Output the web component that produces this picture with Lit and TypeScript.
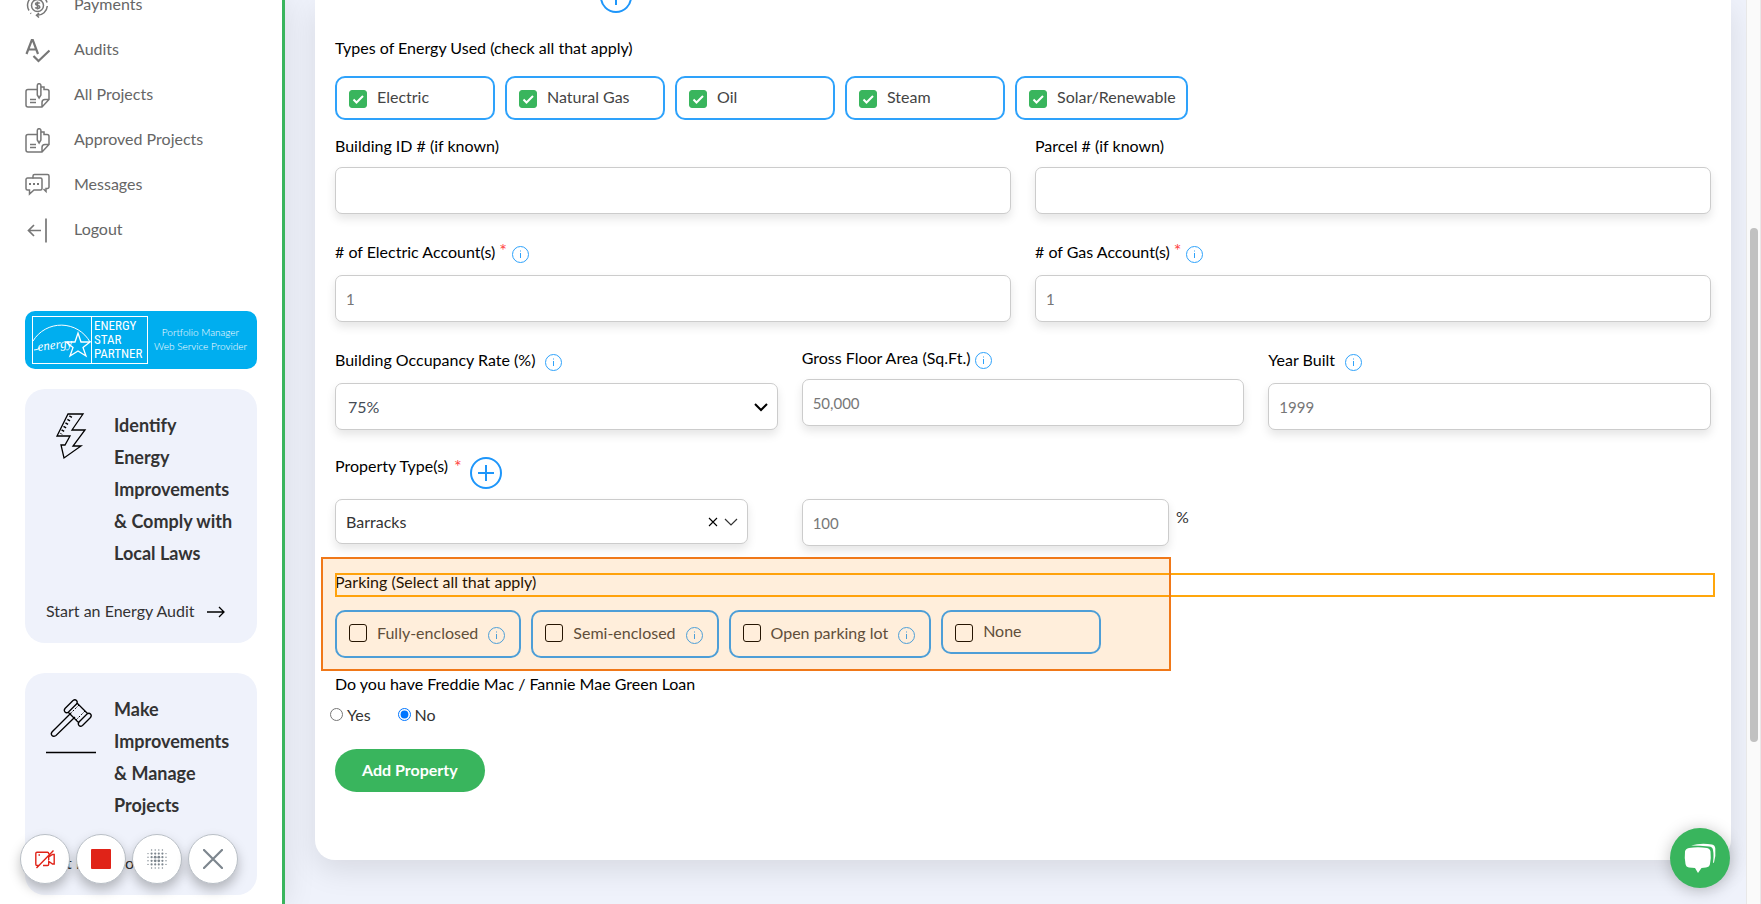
import { LitElement, html, css, svg, nothing, type TemplateResult } from "lit";
import { customElement, property } from "lit/decorators.js";

const note = svg`
  <path d="M12.300 6.500H3a2 2 0 0 0-2 2V22a2 2 0 0 0 2 2h14l7-7.500V8.500a2 2 0 0 0-2-2h-3V4h-3M17 24v-4.500a3 3 0 0 1 3-3h4"/>
  <path d="M12.300 2.500a1.800 1.800 0 0 1 3.600 0V12l-1.800 3-1.800-3z"/><path d="M5 16.500h6M5 19.500h6"/>`;

const icons: Record<string, TemplateResult> = {
  payments: svg`
    <circle cx="12.500" cy="12.500" r="6"/><path d="M14.800 10.500c-.5-1-4.300-1.200-4.300.6 0 2 4.300.8 4.300 2.900 0 1.800-4 1.600-4.500.4M12.500 8.500v8"/>
    <path d="M4 17.500A10 10 0 0 1 7 4M10 2.500A10 10 0 0 1 22 9.500M22.300 13A10 10 0 0 1 12 22.300M14 20l-2.500 2.300L14 24.500M5.500 20l.6.6"/>`,
  audits: svg`<path stroke-width="2.200" d="M1.500 16L6.800 2h1L13 16M3.500 11.500h7.500M8.500 18l5 5L24.500 12.500"/>`,
  note,
  messages: svg`
    <path d="M8 5.500V3a1.500 1.500 0 0 1 1.500-1.500h13A1.500 1.500 0 0 1 24 3v11a1.500 1.500 0 0 1-1.500 1.500H21v3l-2.500-2.500"/>
    <path d="M2.500 5H15.500A1.500 1.500 0 0 1 17 6.500V15.500A1.500 1.500 0 0 1 15.500 17H9L4.500 21V17H2.500A1.500 1.500 0 0 1 1 15.500V6.500A1.500 1.500 0 0 1 2.500 5Z"/>
    <path stroke-width="2" stroke-dasharray="2 2" d="M4 11h10"/>`,
  logout: svg`<path stroke-width="1.700" d="M21 .5v24M16 12.500H4M9 7l-5.500 5.500L9 18"/>`,
};

const infoIcon = html`<svg class="info" viewBox="0 0 17 17" aria-hidden="true">
  <circle cx="8.500" cy="8.500" r="8" fill="none" stroke="currentColor"/>
  <path d="M8.500 7v5M8.500 4.500v1" stroke="currentColor"/></svg>`;

const chevron = (w: number) => html`<svg class="chev" viewBox="0 0 14 14" aria-hidden="true">
  <path d="M1 4L7 10 13 4" fill="none" stroke="currentColor" stroke-width=${w}/></svg>`;

@customElement("app-sidebar")
export class AppSidebar extends LitElement {
  static styles = css`
    :host { display: block; box-sizing: border-box; padding: 0 25px; color: #333; }
    a { color: inherit; text-decoration: none; }
    nav { margin: -18px 0 59px; display: flex; flex-direction: column; }
    .item { display: flex; align-items: center; gap: 24px; height: 45px; color: #666; }
    .item span { margin-bottom: 2px; }
    .item svg { width: 25px; height: 25px; margin-top: 2px; fill: none; stroke: #777; stroke-width: 1.5; }
    .badge { display: flex; align-items: center; gap: 3px; box-sizing: border-box; height: 58px; padding: 5px 7px;
      border-radius: 10px; background: #00aeef; color: #fff; }
    .frame { display: flex; height: 46px; border: 1px solid #fff; }
    .frame svg { width: 58px; height: 46px; }
    .script { font: italic 13px "Liberation Serif", serif; fill: #fff; }
    .star { display: flex; flex-direction: column; justify-content: center; width: 53px; border-left: 1px solid #fff; padding-left: 2px;
      font: 13px/14px "Roboto Condensed", Roboto, sans-serif; }
    .web { flex: 1; padding-bottom: 3px; text-align: center; font: 300 10px/14px Lato, sans-serif; white-space: nowrap; }
    .card { display: flex; flex-direction: column; margin-top: 30px; padding: 20px 23px 20px 21px; border-radius: 20px; background: #eff2fb; }
    .badge + .card { margin-top: 20px; }
    .top { display: grid; grid-template-columns: 50px 1fr; column-gap: 18px; }
    .top svg { width: 50px; height: 60px; margin-top: 2px; fill: none; stroke: #000; stroke-width: 1.3; }
    h3 { margin: 0; font-size: 18px; line-height: 32px; font-weight: 700; }
    .go { display: flex; align-items: center; gap: 12px; height: 24px; margin-top: 30px; white-space: nowrap; }
    .go svg { width: 18px; height: 12px; margin-top: 2px; fill: none; stroke: #000; stroke-width: 1.3; }
  `;

  private item(icon: string, text: string) {
    return html`<a class="item" href="#"><svg viewBox="0 0 25 25" aria-hidden="true">${icons[icon]}</svg><span>${text}</span></a>`;
  }

  private card(icon: TemplateResult, title: string, link: string) {
    return html`<section class="card">
      <div class="top"><svg viewBox="0 0 50 60" aria-hidden="true">${icon}</svg><h3>${title}</h3></div>
      <a class="go" href="#"><span>${link}</span><svg viewBox="0 0 18 12"><path d="M0 6h17M12 1l5 5-5 5"/></svg></a>
    </section>`;
  }

  render() {
    return html`
      <nav aria-label="Account">
        ${this.item("payments", "Payments")} ${this.item("audits", "Audits")}
        ${this.item("note", "All Projects")} ${this.item("note", "Approved Projects")}
        ${this.item("messages", "Messages")} ${this.item("logout", "Logout")}
      </nav>
      <div class="badge">
        <div class="frame">
          <svg viewBox="0 0 58 46" aria-hidden="true">
            <path d="M0 24A33 33 0 0 1 57 25" fill="none" stroke="#fff"/>
            <path d="M45 16l3 9h9l-7 5.500 3 8.500-8-5-8 5 3-8.500-7-5.500h9z" fill="none" stroke="#fff" stroke-width="1.300"/>
            <path d="M1 33q3 0 6-2" fill="none" stroke="#fff"/>
            <text class="script" x="5" y="34" transform="rotate(-7 5 34)">energy</text>
          </svg>
          <div class="star"><span>ENERGY</span><span>STAR</span><span>PARTNER</span></div>
        </div>
        <div class="web">Portfolio Manager<br>Web Service Provider</div>
      </div>
      ${this.card(svg`
        <path d="M22 3h15L26 19h13L27 35h8L18 47 15 34h4l5-9H11z"/>
        <path stroke-dasharray="1.500 2.500" stroke-width="3" d="M25 5L15 23"/>`,
        "Identify Energy Improvements & Comply with Local Laws", "Start an Energy Audit")}
      ${this.card(svg`
        <path d="M25 18L6 37q-1.500 2 0 3.500t4 0L29 22"/>
        <path d="M27 5.500q2-1.500 3.500 0t0 3.500l-8 8q-2 1.500-3.500 0t0-3.500zM41 19q2-1.500 3.500 0t0 3.500l-8 8q-2 1.500-3.500 0t0-3.500zM31 8l11 11M22 17l11 11"/>
        <path stroke-dasharray="2 1.500" stroke-width="1" d="M33 10l-9 9M39 16l-9 9"/><path d="M0 57.500h50"/>`,
        "Make Improvements & Manage Projects", "Get Help Now")}
    `;
  }
}

@customElement("check-chip")
export class CheckChip extends LitElement {
  @property() label = "";
  @property({ type: Boolean }) checked = false;
  @property({ type: Boolean }) info = false;

  static styles = css`
    :host { display: block; min-width: 160px; }
    label { display: flex; align-items: center; gap: 10px; box-sizing: border-box; height: 44px; padding: 0 10px 2px 12px;
      border: 2px solid #2ea2fb; border-radius: 10px; color: #444; white-space: nowrap; }
    .with-info { height: 48px; padding: 0 14px 2px 12px; }
    .tick { display: grid; align-self: flex-start; margin-top: 12px; }
    .tick > * { grid-area: 1 / 1; width: 18px; height: 18px; }
    input { appearance: none; box-sizing: border-box; margin: 0; border: 1px solid #000; border-radius: 3px; }
    input:checked { background: #39b55d; border-color: #39b55d; }
    .info { width: 17px; height: 17px; color: #2ea2fb; margin-top: 4px; fill: none; }
  `;

  render() {
    return html`<label class=${this.info ? "with-info" : ""}>
      <span class="tick"><input type="checkbox" .checked=${this.checked}>
        ${this.checked ? html`<svg viewBox="0 0 18 18" aria-hidden="true"><path d="M4.500 9.500l3 3L14 6" fill="none" stroke="#fff" stroke-width="2"/></svg>` : nothing}
      </span>
      <span>${this.label}</span>${this.info ? infoIcon : nothing}
    </label>`;
  }
}

@customElement("property-form")
export class PropertyForm extends LitElement {
  static styles = css`
    :host { display: block; }
    form { display: flex; flex-direction: column; gap: 25px; }
    .lab { display: flex; align-items: center; box-sizing: border-box; height: 24px; padding-bottom: 2px; line-height: 22px; color: #000; white-space: nowrap; }
    .tall { height: 28px; gap: 10px; }
    .req { gap: 5px; }
    .tight { gap: 4px; }
    .star { align-self: flex-start; color: #f44; font-size: 18px; line-height: 22px; margin-left: -1px; }
    .info { width: 17px; height: 17px; color: #2ea2fb; margin-top: 5px; fill: none; }
    .row { display: grid; gap: 24px; align-items: start; }
    .two { grid-template-columns: 1fr 1fr; }
    .three { grid-template-columns: 1fr 1fr 1fr; }
    .field { display: flex; flex-direction: column; gap: 8px; min-width: 0; }
    .ctl { box-sizing: border-box; width: 100%; height: 47px; margin: 0; padding: 0 10px; border: 1px solid #ccc; border-radius: 7px;
      background: #fff; box-shadow: 0 5px 10px rgba(0, 0, 0, .1); color: #333; font: inherit; appearance: none; }
    .ctl::placeholder { color: #777; font-size: 15px; opacity: 1; }
    .pick { display: grid; align-items: center; }
    .pick > * { grid-area: 1 / 1; }
    .pick .ctl { padding-left: 12px; color: #444b55; }
    .chev { width: 14px; height: 14px; justify-self: end; margin-right: 10px; color: #000; pointer-events: none; }
    .small { margin-right: 30px; }
    .small .ctl { height: 45px; padding-left: 10px; color: #333; }
    .small .chev { color: #333; }
    .clear { justify-self: end; width: 14px; height: 14px; margin-right: 28px; padding: 2px; border: 0; background: none; color: #000; display: grid; }
    .head { display: flex; gap: 10px; height: 36px; }
    .head .star { margin: 0 -2px 0 -4px; }
    .add { width: 32px; height: 32px; margin: 2px 0 0; padding: 0; border: 0; border-radius: 50%; background: none; color: #1e96fa; }
    .add svg { display: block; fill: none; stroke: currentColor; stroke-width: 2; }
    .first { margin-top: -21px; margin-bottom: -3px; }
    .first .lab { width: 255px; }
    .pct { display: flex; gap: 7px; }
    .pct .ctl { width: 83%; }
    .pct span { line-height: 35px; }
    .group { position: relative; display: flex; flex-direction: column; gap: 15px; margin-bottom: -10px; }
    .chips { display: flex; gap: 10px; align-items: flex-start; }
    .outline { position: absolute; box-sizing: border-box; top: 2px; left: 0; right: -4px; height: 24px; border: 2px solid #ffa60c; }
    .mark { position: absolute; box-sizing: border-box; inset: -14px auto -13px -14px; width: 850px; border: 2px solid #f07818; background: rgba(255, 143, 15, .15); pointer-events: none; }
    .loan { gap: 6px; margin-bottom: -3px; }
    .radios { display: flex; gap: 27px; margin-left: -5px; line-height: 24px; }
    .radios label { display: flex; gap: 4px; }
    .radios input { width: 13px; height: 13px; margin: 5px 0 0; accent-color: #0075ff; }
    .submit { align-self: flex-start; height: 43px; padding: 0 27px 2px; border: 0; border-radius: 22px; background: #39b55d; color: #fff; font: inherit; font-weight: 700; }
  `;

  private text(id: string, label: string, placeholder = "", o: { req?: boolean; info?: boolean; tight?: boolean } = {}) {
    const cls = o.tight ? "lab tight" : o.req ? "lab tall req" : o.info ? "lab tall" : "lab";
    return html`<div class="field">
      <label class=${cls} for=${id}><span>${label}</span>${o.req ? html`<span class="star">*</span>` : nothing}${o.info ? infoIcon : nothing}</label>
      <input class="ctl" id=${id} type="text" placeholder=${placeholder}>
    </div>`;
  }

  private add(name: string) {
    return html`<button class="add" type="button" aria-label=${name}>
      <svg viewBox="0 0 32 32"><circle cx="16" cy="16" r="15"/><path d="M16 8v16M8 16h16"/></svg></button>`;
  }

  render() {
    return html`<form>
      <div class="head first"><span class="lab">Other Addresses / Alternate Names</span>${this.add("Add another address")}</div>
      <div class="group" role="group" aria-labelledby="energy">
        <span class="lab" id="energy">Types of Energy Used (check all that apply)</span>
        <div class="chips">
          ${["Electric", "Natural Gas", "Oil", "Steam", "Solar/Renewable"].map((t) => html`<check-chip label=${t} checked></check-chip>`)}
        </div>
      </div>
      <div class="row two">${this.text("bid", "Building ID # (if known)")}${this.text("parcel", "Parcel # (if known)")}</div>
      <div class="row two">
        ${this.text("elec", "# of Electric Account(s)", "1", { req: true, info: true })}
        ${this.text("gas", "# of Gas Account(s)", "1", { req: true, info: true })}
      </div>
      <div class="row three">
        <div class="field">
          <label class="lab tall" for="rate"><span>Building Occupancy Rate (%)</span>${infoIcon}</label>
          <div class="pick"><select class="ctl" id="rate"><option>75%</option></select>${chevron(2)}</div>
        </div>
        ${this.text("area", "Gross Floor Area (Sq.Ft.)", "50,000", { info: true, tight: true })}
        ${this.text("year", "Year Built", "1999", { info: true })}
      </div>
      <div class="field">
        <div class="head"><label class="lab" for="ptype">Property Type(s)</label><span class="star">*</span>${this.add("Add property type")}</div>
        <div class="row three">
          <div class="pick small">
            <select class="ctl" id="ptype"><option>Barracks</option></select>
            <button class="clear" type="button" aria-label="Clear"><svg viewBox="0 0 10 10"><path d="M1 1l8 8M9 1L1 9" stroke="currentColor" stroke-width="1.100"/></svg></button>
            ${chevron(1.2)}
          </div>
          <div class="pct"><input class="ctl" type="text" placeholder="100" aria-label="Share of property, percent"><span>%</span></div>
        </div>
      </div>
      <div class="group" role="group" aria-labelledby="parking">
        <span class="lab" id="parking">Parking (Select all that apply)</span>
        <div class="outline"></div>
        <div class="chips">
          ${["Fully-enclosed", "Semi-enclosed", "Open parking lot"].map((t) => html`<check-chip label=${t} info></check-chip>`)}
          <check-chip label="None"></check-chip>
        </div>
        <div class="mark"></div>
      </div>
      <div class="group loan" role="radiogroup" aria-labelledby="loan">
        <span class="lab" id="loan">Do you have Freddie Mac / Fannie Mae Green Loan</span>
        <div class="radios">
          <label><input type="radio" name="loan">Yes</label>
          <label><input type="radio" name="loan" checked>No</label>
        </div>
      </div>
      <button class="submit" type="button">Add Property</button>
    </form>`;
  }
}

@customElement("app-root")
export class AppRoot extends LitElement {
  static styles = css`
    :host { display: flex; height: 100vh; overflow: hidden; background: #fff; color: #333; font: 16px/24px Lato, "Open Sans", sans-serif; }
    app-sidebar { flex: 0 0 285px; border-right: 3px solid #39b55d; background: #fff; z-index: 1; box-shadow: 0 0 30px rgba(0, 0, 0, .1); }
    main { flex: 1; min-width: 0; overflow: hidden; padding: 0 15px 0 30px; background: #eff2fb; }
    .panel { padding: 0 20px 68px; border-radius: 0 0 20px 20px; background: #fff; box-shadow: 0 10px 30px rgba(0, 0, 0, .1); }
    .bar { display: flex; flex-direction: column; flex: 0 0 15px; box-sizing: border-box; padding: 0 3px; border: solid #e8e8e8; border-width: 0 1px; background: #fafafa; }
    .thumb { flex: 514; border-radius: 4px; background: #c1c1c1; margin-right: -1px; }
    .before { flex: 228; }
    .after { flex: 162; }
    .tools { position: fixed; z-index: 2; left: 20px; bottom: 20px; display: flex; gap: 6px; }
    .tools button { display: grid; place-items: center; width: 50px; height: 50px; padding: 0; border: 1px solid #b9bfc6; border-radius: 50%;
      background: #fff; box-shadow: 0 6px 12px rgba(0, 0, 0, .25); }
    .tools svg { width: 20px; height: 20px; fill: none; }
    .chat { position: fixed; z-index: 2; right: 31px; bottom: 16px; display: grid; place-items: center; width: 60px; height: 60px; padding: 0; border: 0;
      border-radius: 50%; background: #39b55d; box-shadow: 0 2px 16px rgba(0, 0, 0, .25); }
    .chat svg { width: 32px; height: 32px; }
  `;

  render() {
    const dots: TemplateResult[] = [];
    for (let y = 0; y < 6; y++)
      for (let x = 0; x < 6; x++) {
        const d = Math.hypot(x - 2.5, y - 2.5);
        if (d < 3.4) dots.push(svg`<circle cx=${x * 3.6 + 1} cy=${y * 3.6 + 1} r=${d < 1 ? 1.4 : d < 2.3 ? 1.1 : 0.7} fill="#7d868e"/>`);
      }
    return html`
      <app-sidebar></app-sidebar>
      <main><div class="panel"><property-form></property-form></div></main>
      <div class="bar"><div class="before"></div><div class="thumb"></div><div class="after"></div></div>
      <div class="tools">
        <button aria-label="Camera off"><svg viewBox="0 0 20 20" stroke="#e02318" stroke-width="1.400">
          <path d="M4 16.500H2a1.200 1.200 0 0 1-1.200-1.200V4.500A1.200 1.200 0 0 1 2 3.300h10.500a1.200 1.200 0 0 1 1.200 1v1M8 16.500h4.500a1.200 1.200 0 0 0 1.200-1.200v-3l3.800 2.700h1.700V5.500h-1.700L13.700 8v3M1.500 19L18.500 1.500M3.500 6h1.500"/></svg></button>
        <button aria-label="Stop"><svg viewBox="0 0 20 20"><rect width="20" height="20" rx="1" fill="#e02318"/></svg></button>
        <button aria-label="Blur"><svg viewBox="0 0 20 20">${dots}</svg></button>
        <button aria-label="Close"><svg viewBox="0 0 20 20"><path d="M1 1l18 18M19 1L1 19" stroke="#7d868e" stroke-width="2.200" stroke-linecap="round"/></svg></button>
      </div>
      <button class="chat" aria-label="Chat"><svg viewBox="0 0 32 32" fill="#fff">
        <path d="M7 3.500Q17 .5 28 2.500Q31 3 31.300 6.500Q32 14 30 20.500L29 21Q30 13 29 8Q28.500 5 25 4.600Q16 3.500 7 3.500Z"/>
        <path d="M5 6Q14 4.500 23 6Q26 6.500 26.500 9.500Q27.300 16 26 22Q25.500 25 22 25.500L17.500 26 14 31 11 26 5 25.500Q2 25 1.500 22Q.3 16 1 9.500Q1.500 6.500 5 6Z"/></svg></button>
    `;
  }
}
